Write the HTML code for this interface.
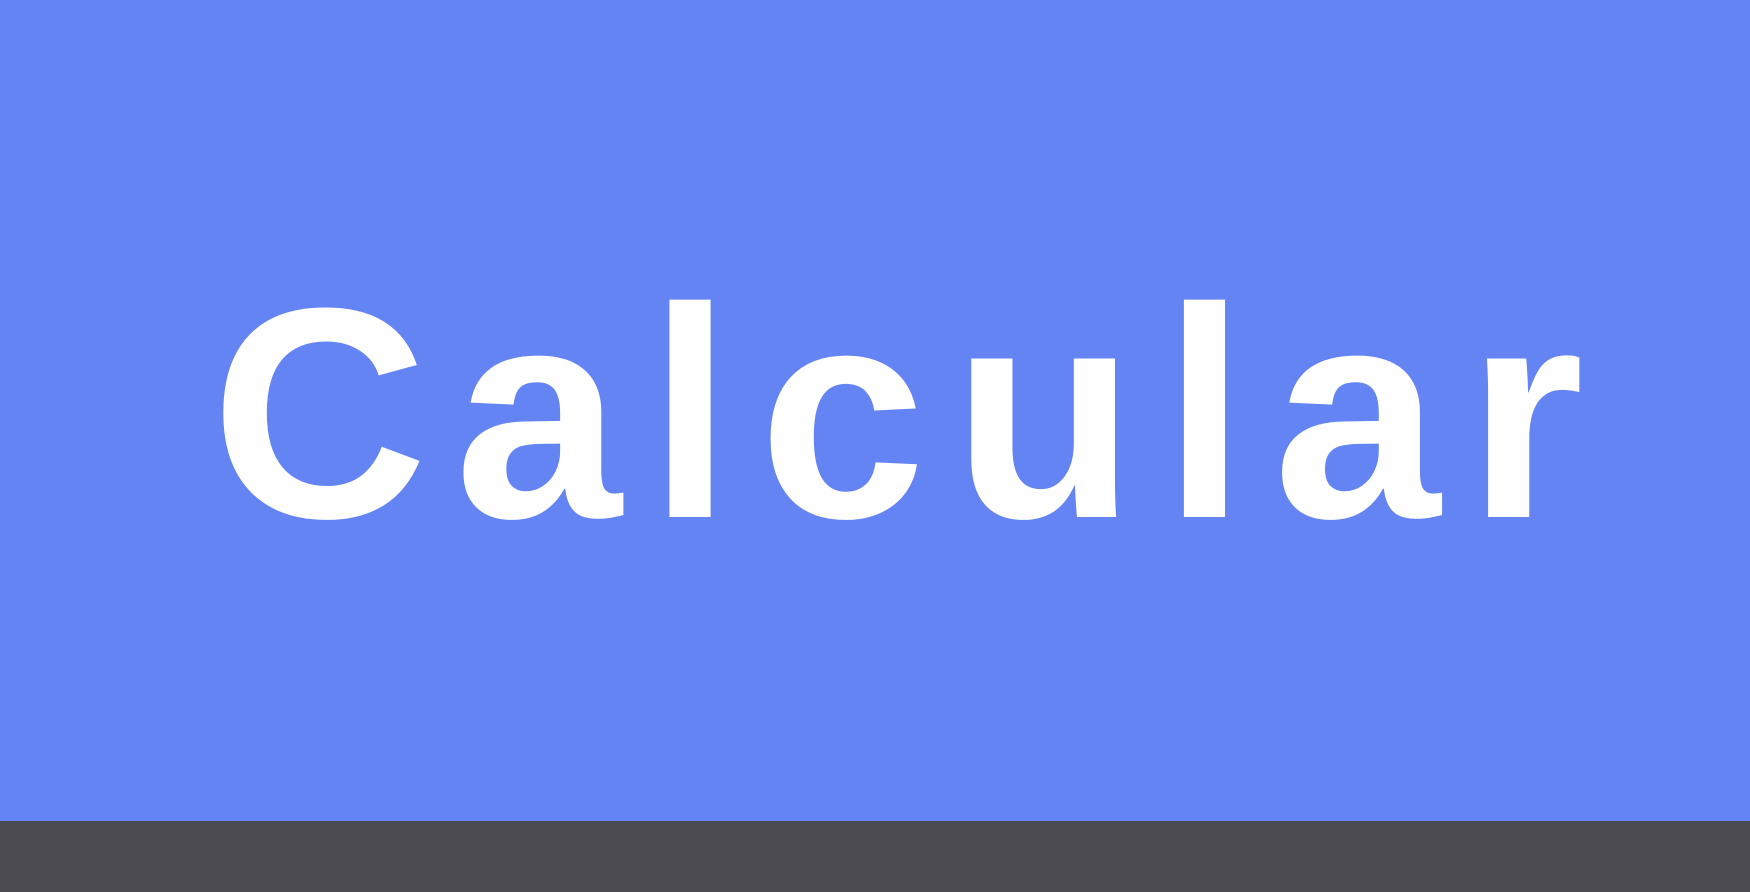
<!DOCTYPE html>
<html><head><meta charset="utf-8"><style>
html,body{margin:0;padding:0;}
body{width:1750px;height:892px;background:#6584f4;position:relative;overflow:hidden;}
.bar{position:absolute;left:0;top:821px;width:1750px;height:71px;background:#4c4b51;}
.t{position:absolute;left:211px;top:263px;font-family:"Liberation Sans",sans-serif;font-weight:bold;font-size:300px;line-height:300px;color:#fff;letter-spacing:27px;white-space:nowrap;}
</style></head><body>
<div class="t">Calcular</div>
<div class="bar"></div>
</body></html>
